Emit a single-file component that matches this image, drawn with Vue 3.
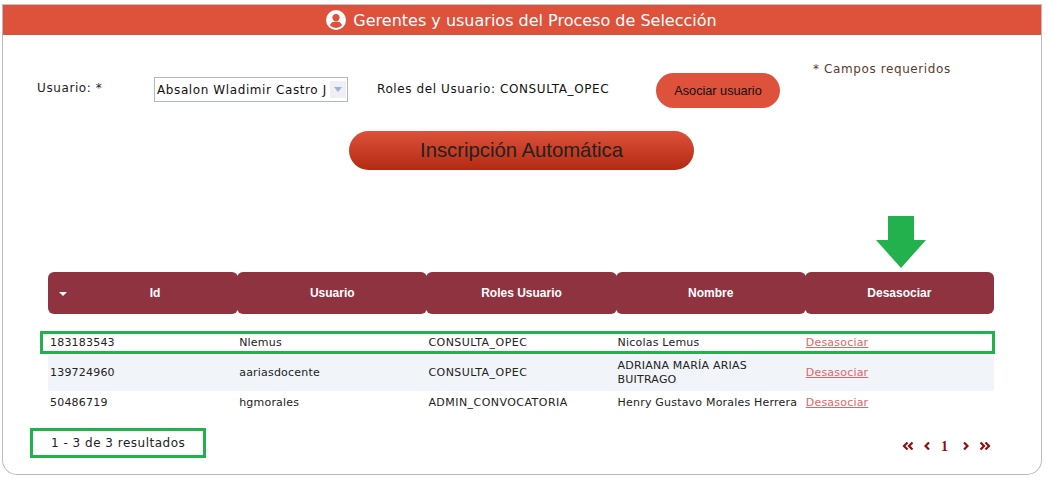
<script setup>
const columns = ["Id", "Usuario", "Roles Usuario", "Nombre", "Desasociar"]

const users = [
  { id: "183183543", user: "Nlemus", role: "CONSULTA_OPEC", name: "Nicolas Lemus" },
  { id: "139724960", user: "aariasdocente", role: "CONSULTA_OPEC", name: "ADRIANA MARÍA ARIAS BUITRAGO" },
  { id: "50486719", user: "hgmorales", role: "ADMIN_CONVOCATORIA", name: "Henry Gustavo Morales Herrera" }
]
</script>

<template>
  <div class="panel">
    <header class="title">
      <svg class="title-icon" viewBox="0 0 20 20" width="20" height="20">
        <circle cx="10" cy="10" r="10" fill="#fff" />
        <circle cx="10" cy="7.6" r="3.6" fill="#df513b" />
        <path d="M3.9 15.2c1-2.6 3.3-3.6 6.1-3.6s5.100 1 6.100 3.6A8 8 0 0 1 10 18a8 8 0 0 1-6.100-2.800z" fill="#df513b" />
      </svg>
      <span>Gerentes y usuarios del Proceso de Selección</span>
    </header>

    <section class="form-row">
      <label class="user-label">Usuario: *</label>
      <div class="select">
        <span class="select-text">Absalon Wladimir Castro J</span>
        <span class="select-btn"><i></i></span>
      </div>
      <span class="roles">Roles del Usuario: CONSULTA_OPEC</span>
      <button class="assoc">Asociar usuario</button>
      <span class="required">* Campos requeridos</span>
    </section>

    <div class="auto-row">
      <button class="auto">Inscripción Automática</button>
    </div>

    <div class="arrow-row">
      <svg viewBox="0 0 50 52" width="50" height="52">
        <path d="M12 0h26v24h12L25 52 0 24h12z" fill="#22b14c" />
      </svg>
    </div>

    <div class="table">
      <div class="thead">
        <div v-for="(c, i) in columns" :key="c" class="th" :class="{ sorted: i === 0 }">
          <i v-if="i === 0" class="sort"></i>
          {{ c }}
        </div>
      </div>
      <div class="tbody">
        <div v-for="(u, i) in users" :key="u.id" class="tr" :class="{ alt: i === 1, marked: i === 0 }">
          <div class="td">{{ u.id }}</div>
          <div class="td">{{ u.user }}</div>
          <div class="td role">{{ u.role }}</div>
          <div class="td">{{ u.name }}</div>
          <div class="td link"><a href="#">Desasociar</a></div>
        </div>
      </div>
    </div>

    <footer class="foot">
      <div class="count">1 - 3 de 3 resultados</div>
      <nav class="pager">
        <svg viewBox="0 0 12 8" width="12" height="8"><path d="M5.500 .5 2 4l3.500 3.500M10.500 .5 7 4l3.500 3.500" fill="none" stroke="#8f1010" stroke-width="2.200" /></svg>
        <svg viewBox="0 0 7 8" width="7" height="8"><path d="M5 .5 1.500 4 5 7.500" fill="none" stroke="#8f1010" stroke-width="2.200" /></svg>
        <b>1</b>
        <svg viewBox="0 0 7 8" width="7" height="8"><path d="M2 .5 5.500 4 2 7.500" fill="none" stroke="#8f1010" stroke-width="2.200" /></svg>
        <svg viewBox="0 0 12 8" width="12" height="8"><path d="M1.500 .5 5 4 1.500 7.500M6.500 .5 10 4 6.500 7.500" fill="none" stroke="#8f1010" stroke-width="2.200" /></svg>
      </nav>
    </footer>
  </div>
</template>

<style>
html, body { background: #fff; }
</style>

<style scoped>
.panel {
  box-sizing: border-box;
  width: 1040px;
  height: 471px;
  margin: 4px 0 0 2px;
  border: 1px solid #bbb;
  border-top-color: #c4c4c4;
  border-radius: 0 0 15px 15px;
  font-family: "DejaVu Sans", sans-serif;
  font-size: 11px;
  color: #222;
  overflow: hidden;
}

.title {
  height: 30px;
  background: #de513b;
  color: #fff;
  font-size: 16px;
  display: flex;
  align-items: center;
  justify-content: center;
  gap: 7px;
  padding-right: 1px;
}

.form-row {
  display: flex;
  align-items: flex-start;
  height: 96px;
  padding-left: 34px;
  font-size: 12px;
  letter-spacing: .6px;
}

.user-label { width: 117px; margin-top: 45px; line-height: 16px; }

.select {
  box-sizing: border-box;
  width: 194px;
  height: 25px;
  margin-top: 42px;
  border: 1px solid #b0b5c8;
  display: flex;
  align-items: center;
  padding-left: 2px;
  background: #fff;
  color: #111;
}

.select-text { flex: 1; overflow: hidden; white-space: nowrap; }

.select-btn {
  width: 16px;
  height: 17px;
  margin-right: 1px;
  background: #eef0f4;
  display: flex;
  align-items: center;
  justify-content: center;
}

.select-btn i {
  border-left: 4px solid transparent;
  border-right: 4px solid transparent;
  border-top: 5px solid #9fb2d6;
}

.roles { width: 279px; margin: 46px 0 0 29px; white-space: nowrap; color: #111; line-height: 16px; }

.assoc {
  width: 124px;
  height: 35px;
  margin-top: 38px;
  border: 0;
  border-radius: 18px;
  background: #de513b;
  color: #111;
  font: 12.700px "Liberation Sans", sans-serif;
  padding: 0;
}

.required { margin: 26px 0 0 33px; color: #5c3a30; white-space: nowrap; line-height: 16px; }

.auto-row { display: flex; justify-content: center; padding-right: 1px; }

.auto {
  width: 345px;
  height: 39px;
  border: 0;
  border-radius: 20px;
  background: linear-gradient(#dc513a, #b32a12);
  color: #222;
  font: 20.300px "Liberation Sans", sans-serif;
  padding: 0 0 0 0;
}

.arrow-row {
  display: flex;
  justify-content: flex-end;
  padding: 46px 115px 0 0;
  height: 56px;
}

.table { margin: 0 46px 0 45px; }

.thead, .tr {
  display: grid;
  grid-template-columns: repeat(5, 1fr);
  width: 946px;
}

.th {
  height: 42px;
  background: #8f3341;
  border-radius: 6px;
  color: #fff;
  font: bold 12px "Liberation Sans", sans-serif;
  display: flex;
  align-items: center;
  justify-content: center;
  position: relative;
  margin-right: -1px;
}

.th:last-child { margin-right: 0; }

.th.sorted { padding-left: 24px; }

.sort {
  position: absolute;
  left: 11px;
  top: 20px;
  border-left: 4px solid transparent;
  border-right: 4px solid transparent;
  border-top: 4px solid #fff;
}

.tbody { margin-top: 20px; }

.tr { align-items: center; letter-spacing: .2px; position: relative; }

.tr.marked { height: 17px; }

/* recuadro verde sobre la primera fila */
.tr.marked::after {
  content: "";
  position: absolute;
  inset: -3px -1px -3px -8px;
  border: 3px solid #22b14c;
}

.tr.alt { background: #f1f4f9; margin-top: 4px; height: 36px; }

.tr:last-child { height: 24px; }

.td { padding: 0 2px; line-height: 14px; }

.td.role { letter-spacing: .45px; }

.td.link { padding-left: 1px; }

.td a { color: #e06666; }

.foot {
  display: flex;
  justify-content: space-between;
  align-items: center;
  margin: 13px 50px 0 27px;
}

.count {
  box-sizing: border-box;
  width: 176px;
  height: 30px;
  border: 3px solid #22b14c;
  display: flex;
  align-items: center;
  padding-left: 18px;
  font-size: 12px;
  letter-spacing: .5px;
}

.pager { display: flex; align-items: center; gap: 10px; padding-top: 6px; }

.pager b { font: bold 14px "Liberation Serif", serif; color: #8f1010; margin: 2px 4px 0 0; }
</style>
